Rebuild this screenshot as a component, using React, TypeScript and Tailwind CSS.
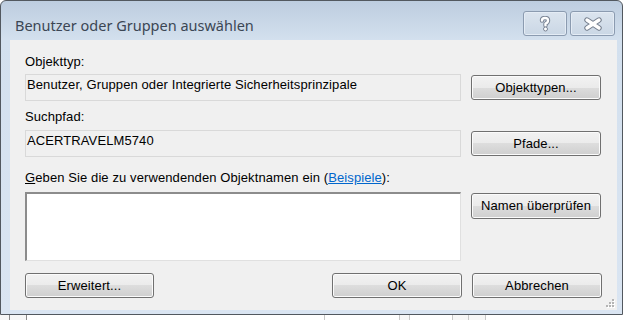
import React from "react";

const btn =
  "flex items-center justify-center rounded-[3px] border border-[#707070] bg-[linear-gradient(#f2f2f2_0%,#ebebeb_50%,#dddddd_50%,#cfcfcf_100%)] shadow-[inset_0_0_0_1px_#fbfbfb] text-[13px] leading-4 tracking-[0.1px] text-black";

function TitleButton({ children, w }: { children: React.ReactNode; w: string }) {
  return (
    <div
      className={`${w} h-[25px] flex items-center justify-center rounded-[3px] border border-[#8b9bb0] bg-[linear-gradient(#dbe4ee,#cad7e5)] shadow-[inset_0_0_0_1px_#e4ecf5]`}
    >
      {children}
    </div>
  );
}

function HelpGlyph() {
  return (
    <svg width="12" height="16" viewBox="-6 -8 12 16">
      <g fill="none" strokeLinecap="round" strokeLinejoin="round">
        <path d="M-3 -3.5 Q-3 -6 0 -6 Q3 -6 3 -3.5 Q3 -1.5 0.5 -0.3 L0.5 1.5" stroke="#7a8494" strokeWidth="4.4" />
        <path d="M-3 -3.5 Q-3 -6 0 -6 Q3 -6 3 -3.5 Q3 -1.5 0.5 -0.3 L0.5 1.5" stroke="#ffffff" strokeWidth="2.4" />
      </g>
      <circle cx="0.5" cy="5" r="2" fill="#ffffff" stroke="#7a8494" strokeWidth="1" />
    </svg>
  );
}

function CloseGlyph() {
  return (
    <svg width="18" height="14" viewBox="-9 -7 18 14">
      <g strokeLinecap="round">
        <path d="M-6 -4 L6 4 M-6 4 L6 -4" stroke="#737d8c" strokeWidth="5.4" />
        <path d="M-6 -4 L6 4 M-6 4 L6 -4" stroke="#ffffff" strokeWidth="3.4" />
      </g>
    </svg>
  );
}

function SizeGrip() {
  const dots = [
    [6, 0],
    [3, 3],
    [6, 3],
    [0, 6],
    [3, 6],
    [6, 6],
  ];
  return (
    <svg width="9" height="9" viewBox="0 0 9 9" className="absolute right-[2px] bottom-[2px]">
      {dots.map(([x, y], i) => (
        <g key={i}>
          <rect x={x + 1} y={y + 1} width="2" height="2" fill="#ffffff" />
          <rect x={x} y={y} width="2" height="2" fill="#b4b4b4" />
        </g>
      ))}
    </svg>
  );
}

export default function App() {
  return (
    <div className="w-[624px] h-[320px] bg-white overflow-hidden flex flex-col font-['Liberation_Sans',Arial,sans-serif]">
      <div className="w-[623px] h-[315px] shrink-0 border border-[#52585f] rounded-t-[6px] bg-[linear-gradient(#bdcddf,#d3e0ee_39px,#dae5f2)] flex flex-col">
        {/* title bar */}
        <div className="h-[39px] flex items-start">
          <span className="pl-[14px] pt-[14px] text-[14.5px] leading-5 text-[#3b4654] font-['Noto_Sans','Open_Sans',sans-serif]">
            Benutzer oder Gruppen auswählen
          </span>
          <div className="ml-auto mr-[7px] mt-[10px] flex gap-[3px]">
            <TitleButton w="w-[44px]">
              <HelpGlyph />
            </TitleButton>
            <TitleButton w="w-[45px]">
              <CloseGlyph />
            </TitleButton>
          </div>
        </div>

        {/* client area */}
        <div className="relative ml-[9px] mr-[5px] h-[270px] bg-[#f0f0f0] px-[15px] flex flex-col text-[13px] leading-4 tracking-[0.1px] text-black">
          <div className="mt-[14px] h-4">Objekttyp:</div>
          <div className="mt-[4px] flex items-center">
            <div className="w-[436px] h-[27px] border border-[#d9d9d9] px-[1px] pt-[2px]">
              Benutzer, Gruppen oder Integrierte Sicherheitsprinzipale
            </div>
            <div className={`${btn} ml-[10px] w-[130px] h-[25px]`}>Objekttypen...</div>
          </div>

          <div className="mt-[8px] h-4">Suchpfad:</div>
          <div className="mt-[5px] flex items-center">
            <div className="w-[436px] h-[27px] border border-[#d9d9d9] px-[1px] pt-[2px]">ACERTRAVELM5740</div>
            <div className={`${btn} ml-[10px] w-[130px] h-[25px]`}>Pfade...</div>
          </div>

          <div className="mt-[13px] h-4">
            <span className="underline">G</span>eben Sie die zu verwendenden Objektnamen ein (
            <span className="text-[#0066cc] underline">Beispiele</span>):
          </div>
          <div className="mt-[6px] flex items-start">
            <div className="w-[436px] h-[69px] bg-white border-t-2 border-l-2 border-r border-b border-t-[#8c8c8c] border-l-[#8c8c8c] border-r-[#e0e0e0] border-b-[#e0e0e0]" />
            <div className={`${btn} ml-[10px] mt-[1px] w-[130px] h-[26px]`}>Namen überprüfen</div>
          </div>

          <div className="mt-[12px] flex">
            <div className={`${btn} w-[129px] h-[25px]`}>Erweitert...</div>
            <div className={`${btn} ml-auto w-[130px] h-[25px]`}>OK</div>
            <div className={`${btn} ml-[10px] w-[130px] h-[25px]`}>Abbrechen</div>
          </div>

          <SizeGrip />
        </div>
      </div>

      {/* list view of the window behind */}
      <div className="flex-1 flex bg-[#f7f7f7]">
        <div className="w-[9px]" />
        <div className="w-[17px] border-l border-[#8a8a8a]" />
        <div className="w-[298px] border-l border-[#8a8a8a] bg-white" />
        <div className="w-[75px] border-l border-[#c8c8c8] bg-white" />
        <div className="w-[10px] border-l border-[#c8c8c8]" />
        <div className="w-[43px] border-l border-[#c8c8c8] bg-white" />
        <div className="w-[16px] border-l border-[#c8c8c8]" />
        <div className="w-[17px] border-l border-[#c8c8c8]" />
        <div className="flex-1 border-l border-[#c8c8c8] bg-white" />
      </div>
    </div>
  );
}
